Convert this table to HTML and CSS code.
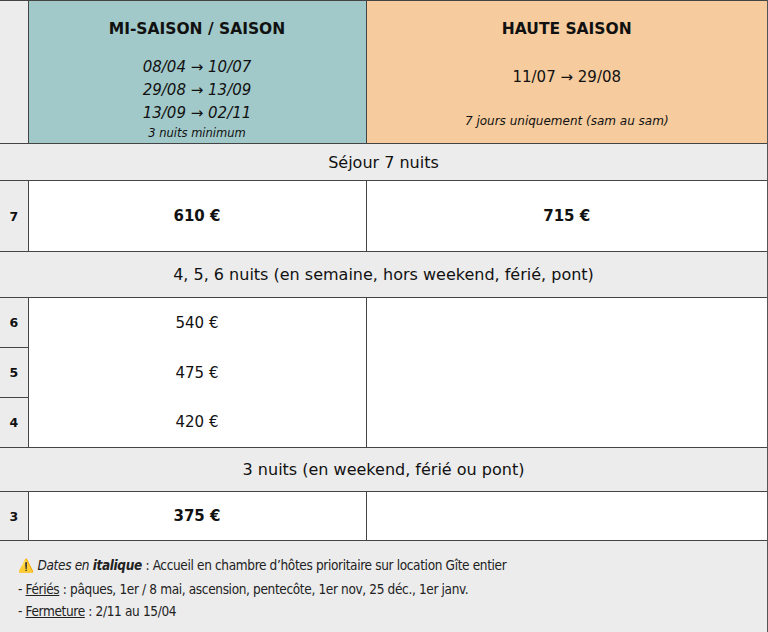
FILE: index.html
```html
<!DOCTYPE html>
<html lang="fr">
<head>
<meta charset="utf-8">
<title>Tarifs</title>
<link rel="stylesheet" href="styles.css">
</head>
<body>
<table class="rates">
  <colgroup>
    <col class="c-num">
    <col class="c-mid">
    <col class="c-high">
  </colgroup>
  <tr class="head">
    <td class="num"></td>
    <td class="mid">
      <div class="title">MI-SAISON / SAISON</div>
      <div class="dates it">08/04 → 10/07<br>29/08 → 13/09<br>13/09 → 02/11</div>
      <div class="note it">3 nuits minimum</div>
    </td>
    <td class="high last">
      <div class="title">HAUTE SAISON</div>
      <div class="dates dates-high">11/07 → 29/08</div>
      <div class="note note-high it">7 jours uniquement (sam au sam)</div>
    </td>
  </tr>
  <tr class="section s1"><td class="last" colspan="3">Séjour 7 nuits</td></tr>
  <tr class="r7">
    <td class="num">7</td>
    <td class="price bold">610 €</td>
    <td class="price bold last">715 €</td>
  </tr>
  <tr class="section s2"><td class="last" colspan="3">4, 5, 6 nuits (en semaine, hors weekend, férié, pont)</td></tr>
  <tr class="rs top">
    <td class="num">6</td>
    <td class="price plain">540 €</td>
    <td class="price last" rowspan="3"></td>
  </tr>
  <tr class="rs">
    <td class="num">5</td>
    <td class="price plain">475 €</td>
  </tr>
  <tr class="rs bottom">
    <td class="num">4</td>
    <td class="price plain">420 €</td>
  </tr>
  <tr class="section s3"><td class="last" colspan="3">3 nuits (en weekend, férié ou pont)</td></tr>
  <tr class="r3">
    <td class="num">3</td>
    <td class="price bold">375 €</td>
    <td class="price last"></td>
  </tr>
  <tr class="foot">
    <td class="last" colspan="3">
      <div class="fline"><span class="warn">⚠️</span> <em>Dates en <strong>italique</strong></em> : Accueil en chambre d’hôtes prioritaire sur location Gîte entier</div>
      <div class="fline">- <u>Fériés</u> : pâques, 1er / 8 mai, ascension, pentecôte, 1er nov, 25 déc., 1er janv.</div>
      <div class="fline">- <u>Fermeture</u> : 2/11 au 15/04</div>
    </td>
  </tr>
</table>
</body>
</html>
```

FILE: styles.css
```css
html, body {
  margin: 0;
  padding: 0;
  background: #ececec;
}

.rates {
  width: 768px;
  table-layout: fixed;
  border-collapse: collapse;
  font-family: "DejaVu Sans", sans-serif;
  color: #111;
}

.c-num { width: 28px; }
.c-mid { width: 338px; }
.c-high { width: 402px; }

.rates td {
  border: 1px solid #444;
  padding: 0;
  text-align: center;
  vertical-align: middle;
}

.rates td.last { border-right: 2px solid #555; }
.rates td.num { border-left: none; }
.rates .section td, .rates .foot td { border-left: none; }

.head { height: 143px; }
.head td { border-top: 1px solid #444; vertical-align: top; }
.head .num { background: #ececec; }
.head .mid { background: #a2c9c9; }
.head .high { background: #f6cc9e; }

.title {
  font-weight: bold;
  font-size: 15.5px;
  margin-top: 19px;
}

.it { font-style: italic; }

.dates {
  font-size: 15px;
  line-height: 23px;
  margin-top: 18px;
}

.dates-high {
  font-style: normal;
  margin-top: 28px;
}

.note {
  font-size: 11.5px;
  margin-top: 1px;
}

.note-high {
  font-size: 12px;
  margin-top: 25px;
}

.section td {
  background: #ececec;
  font-size: 16px;
}

.s1 { height: 37px; }
.s2 { height: 46px; }
.s3 { height: 44px; }

.num {
  background: #ececec;
  font-size: 12.5px;
  font-weight: bold;
}

.price { background: #fff; font-size: 15px; }
.price.bold { font-weight: bold; }
.price.plain { font-weight: normal; }

.r7 { height: 71px; }
.r3 { height: 49px; }
.rs { height: 50px; }
.rs .plain { border-top: none; border-bottom: none; }
.rs.top .plain { border-top: 1px solid #444; }
.rs.bottom .plain { border-bottom: 1px solid #444; }

.foot td {
  background: #ececec;
  text-align: left;
  vertical-align: top;
  height: 90px;
  padding: 13px 0 0 18px;
  border-bottom: 2px solid #444;
  font-family: "DejaVu Sans Condensed", "Liberation Sans Narrow", sans-serif;
  font-size: 13.5px;
  letter-spacing: -0.35px;
  color: #222;
}

.fline { line-height: 22.5px; }
.warn { font-size: 13px; color: #f2c200; letter-spacing: 0; }
```
